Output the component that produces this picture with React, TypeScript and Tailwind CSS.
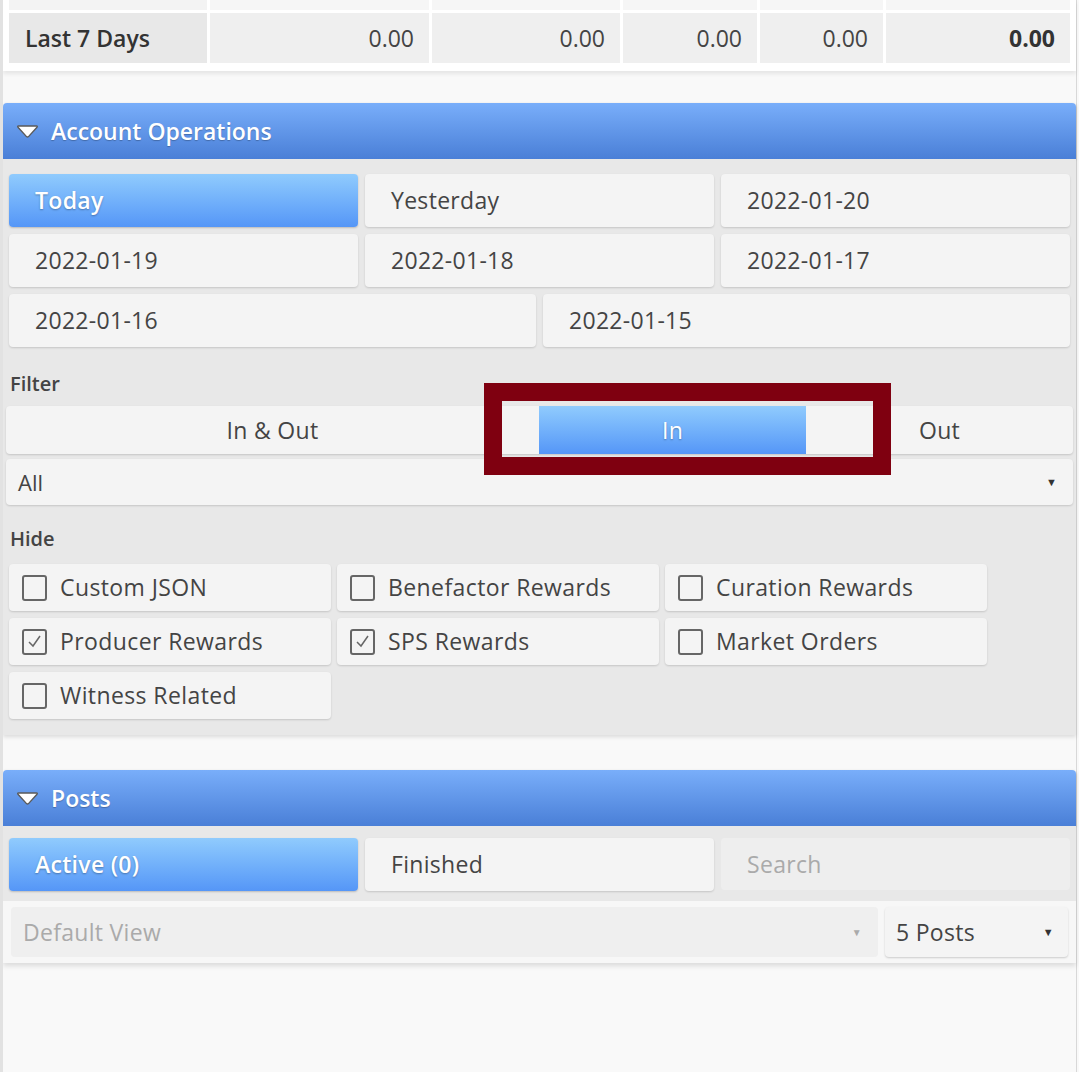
import { useState } from 'react';

const font = { fontFamily: '"Open Sans", "Liberation Sans", sans-serif' };

function Caret({ className = '' }: { className?: string }) {
  return (
    <svg width="23" height="15" viewBox="0 0 23 15" className={className}>
      <path
        d="M2.5 2 L20.5 2 Q21.8 2 21 3.2 L12.5 12.6 Q11.5 13.6 10.5 12.6 L2 3.2 Q1.2 2 2.5 2 Z"
        fill="#ffffff"
        stroke="#5a5a5a"
        strokeWidth="1.4"
      />
    </svg>
  );
}

function PanelHeader({ title }: { title: string }) {
  return (
    <div className="h-[56px] flex items-center gap-[12px] pl-[13px] rounded-t-[4px] bg-gradient-to-b from-[#79aefa] to-[#4a7fd7] shadow-[0_1px_2px_rgba(0,0,0,0.25)]">
      <Caret />
      <span className="text-[23px] font-semibold text-white [text-shadow:0_1px_1px_rgba(0,0,0,0.25)]">{title}</span>
    </div>
  );
}

function Btn({ label, active, className = '' }: { label: string; active?: boolean; className?: string }) {
  return (
    <button
      className={`flex-1 h-[53px] rounded-[4px] pl-[26px] text-left text-[23px] tracking-[0.3px] ${
        active
          ? 'bg-gradient-to-b from-[#90cbfd] to-[#5596f7] text-white font-semibold [text-shadow:0_1px_2px_rgba(0,0,0,0.3)] shadow-[0_1px_2px_rgba(0,0,0,0.2)]'
          : 'bg-[#f4f4f4] text-[#444] shadow-[0_1px_2px_rgba(0,0,0,0.15)]'
      } ${className}`}
    >
      {label}
    </button>
  );
}

function Check({ label, checked }: { label: string; checked: boolean }) {
  return (
    <div className="w-[322px] h-[47px] flex items-center gap-[13px] pl-[13px] bg-[#f4f4f4] rounded-[4px] shadow-[0_1px_2px_rgba(0,0,0,0.15)]">
      <div className="w-[25px] h-[26px] border-2 border-[#666] rounded-[3px] flex items-center justify-center">
        {checked && (
          <svg width="17" height="17" viewBox="0 0 17 17">
            <path d="M3 9 L7 13 L14 3" fill="none" stroke="#666" strokeWidth="1.5" />
          </svg>
        )}
      </div>
      <span className="text-[23px] tracking-[0.4px] text-[#444]">{label}</span>
    </div>
  );
}

export default function App() {
  const [filter, setFilter] = useState<'both' | 'in' | 'out'>('in');

  const values = ['0.00', '0.00', '0.00', '0.00'];
  const widths = ['w-[219px]', 'w-[188px]', 'w-[134px]', 'w-[123px]'];

  const hide = [
    { label: 'Custom JSON', checked: false },
    { label: 'Benefactor Rewards', checked: false },
    { label: 'Curation Rewards', checked: false },
    { label: 'Producer Rewards', checked: true },
    { label: 'SPS Rewards', checked: true },
    { label: 'Market Orders', checked: false },
    { label: 'Witness Related', checked: false },
  ];

  return (
    <div style={font} className="w-[1079px] h-[1072px] overflow-hidden bg-[#f9f9f9] border-l-[3px] border-[#e2e2e2]">
      <div className="w-[1074px] h-full border-r border-[#d8d8d8]">
        {/* totals table */}
        <div className="bg-white px-[6px] pb-[8px] shadow-[0_3px_4px_rgba(0,0,0,0.08)]">
          <div className="flex gap-[3px] h-[10px]">
            <div className="w-[198px] bg-[#f3f3f3]" />
            {widths.map((w, i) => (
              <div key={i} className={`${w} bg-[#f6f6f6]`} />
            ))}
            <div className="flex-1 bg-[#f6f6f6]" />
          </div>
          <div className="flex gap-[3px] h-[50px] mt-[3px] text-[23px]">
            <div className="w-[198px] bg-[#e8e8e8] flex items-center pl-[16px] font-semibold text-[#333]">Last 7 Days</div>
            {values.map((v, i) => (
              <div key={i} className={`${widths[i]} bg-[#efefef] flex items-center justify-end pr-[15px] text-[#444]`}>
                {v}
              </div>
            ))}
            <div className="flex-1 bg-[#efefef] flex items-center justify-end pr-[15px] font-bold text-[#333]">0.00</div>
          </div>
        </div>

        {/* account operations */}
        <div className="mt-[32px] shadow-[0_2px_4px_rgba(0,0,0,0.12)]">
          <PanelHeader title="Account Operations" />
          <div className="bg-[#e8e8e8] px-[3px] pt-[15px] pb-[16px]">
            <div className="px-[3px] flex flex-col gap-[7px]">
              <div className="flex gap-[7px]">
                <Btn label="Today" active />
                <Btn label="Yesterday" />
                <Btn label="2022-01-20" />
              </div>
              <div className="flex gap-[7px]">
                <Btn label="2022-01-19" />
                <Btn label="2022-01-18" />
                <Btn label="2022-01-17" />
              </div>
              <div className="flex gap-[7px]">
                <Btn label="2022-01-16" />
                <Btn label="2022-01-15" />
              </div>
            </div>

            <div className="pl-[4px] mt-[23px] text-[20px] font-semibold text-[#444] leading-[28px]">Filter</div>
            <div className="relative mt-[8px]">
              <div className="flex h-[48px] bg-[#f4f4f4] rounded-[4px] shadow-[0_1px_2px_rgba(0,0,0,0.15)] text-[23px] tracking-[0.3px] text-[#444]">
                <button onClick={() => setFilter('both')} className="w-[533px] flex items-center justify-center">
                  In &amp; Out
                </button>
                <button
                  onClick={() => setFilter('in')}
                  className={`w-[267px] flex items-center justify-center ${
                    filter === 'in'
                      ? 'bg-gradient-to-b from-[#90cbfd] to-[#5596f7] text-white [text-shadow:0_1px_2px_rgba(0,0,0,0.3)]'
                      : ''
                  }`}
                >
                  In
                </button>
                <button onClick={() => setFilter('out')} className="flex-1 flex items-center justify-center">
                  Out
                </button>
              </div>
              {/* highlight frame */}
              <div className="absolute left-[478px] top-[-23px] w-[407px] h-[92px] border-[18px] border-[#7f0010]" />
            </div>
            <div className="mt-[5px] h-[46px] bg-[#f4f4f4] rounded-[4px] shadow-[0_1px_2px_rgba(0,0,0,0.15)] flex items-center justify-between pl-[12px] pr-[16px] text-[22px] text-[#444]">
              <span>All</span>
              <span className="text-[11px] text-[#333]">▼</span>
            </div>

            <div className="pl-[4px] mt-[20px] text-[20px] font-semibold text-[#444] leading-[28px]">Hide</div>
            <div className="px-[3px] mt-[11px] grid grid-cols-[322px_322px_322px] gap-x-[6px] gap-y-[7px]">
              {hide.map((h) => (
                <Check key={h.label} label={h.label} checked={h.checked} />
              ))}
            </div>
          </div>
        </div>

        {/* posts */}
        <div className="mt-[35px] shadow-[0_3px_5px_rgba(0,0,0,0.12)]">
          <PanelHeader title="Posts" />
          <div className="bg-[#e8e8e8] px-[6px] pt-[12px] pb-[10px] flex gap-[7px]">
            <Btn label="Active (0)" active className="h-[52px]" />
            <Btn label="Finished" className="h-[52px]" />
            <div className="flex-1 h-[52px] rounded-[4px] bg-[#eeeeee] pl-[26px] flex items-center text-[23px] tracking-[0.3px] text-[#aaa]">Search</div>
          </div>
          <div className="bg-[#f7f7f7] h-[62px] pl-[8px] pr-[8px] flex items-center gap-[7px]">
            <div className="w-[867px] h-[50px] rounded-[4px] bg-[#efefef] flex items-center justify-between pl-[12px] pr-[16px] text-[23px] tracking-[0.3px] text-[#aaa]">
              <span>Default View</span>
              <span className="text-[10px] text-[#aaa]">▼</span>
            </div>
            <div className="flex-1 h-[50px] rounded-[4px] bg-[#f4f4f4] shadow-[0_1px_2px_rgba(0,0,0,0.18)] flex items-center justify-between pl-[11px] pr-[14px] text-[23px] tracking-[0.3px] text-[#444]">
              <span>5 Posts</span>
              <span className="text-[11px] text-[#333]">▼</span>
            </div>
          </div>
        </div>
      </div>
    </div>
  );
}
